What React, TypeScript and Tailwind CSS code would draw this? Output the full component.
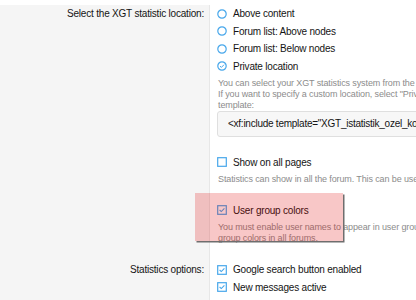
import { ReactNode } from 'react';

const font = { fontFamily: '"Liberation Sans", Arial, sans-serif' };

function Radio({ checked }: { checked?: boolean }) {
    return (
        <svg viewBox="0 0 10 10" className="w-[10px] h-[10px] shrink-0">
            <circle cx="5" cy="5" r="4.2" fill="white" stroke="#47a7eb" strokeWidth="1.2" />
            {checked && <path d="M3 5.1 L4.4 6.4 L7 3.7" fill="none" stroke="#47a7eb" strokeWidth="1" />}
        </svg>
    );
}

function Check({ checked }: { checked?: boolean }) {
    return (
        <svg viewBox="0 0 10 10" className="w-[10px] h-[10px] shrink-0">
            <rect x="0.7" y="0.7" width="8.6" height="8.6" fill="white" stroke="#47a7eb" strokeWidth="1.2" />
            {checked && <path d="M2.6 5 L4.3 6.6 L7.4 3.4" fill="none" stroke="#47a7eb" strokeWidth="1.1" />}
        </svg>
    );
}

function Option({ icon, children }: { icon: ReactNode; children: ReactNode }) {
    return (
        <div className="flex items-center h-[17.5px] gap-[6px] text-[10px] tracking-[-0.2px] text-[#141414]">
            {icon}
            <span>{children}</span>
        </div>
    );
}

function Hint({ children }: { children: ReactNode }) {
    return <div className="text-[9px] leading-[11px] tracking-[-0.12px] text-[#8c8c8c] pl-[1px]">{children}</div>;
}

function Row({ label, children, className = '' }: { label?: string; children: ReactNode; className?: string }) {
    return (
        <div className={`flex ${className}`}>
            <div className="w-[210px] shrink-0 bg-[#f5f5f5] border-r border-[#e7e7e7] pr-[5px] text-right">
                {label && (
                    <div className="h-[17.5px] leading-[17.5px] text-[10px] tracking-[-0.2px] text-[#141414]">{label}</div>
                )}
            </div>
            <div className="flex-1 pl-[7px] bg-white">{children}</div>
        </div>
    );
}

export default function App() {
    return (
        <div className="relative w-[416px] h-[300px] overflow-hidden whitespace-nowrap bg-white" style={font}>
            <Row label="Select the XGT statistic location:" className="pt-[5px]">
                <Option icon={<Radio />}>Above content</Option>
                <Option icon={<Radio />}>Forum list: Above nodes</Option>
                <Option icon={<Radio />}>Forum list: Below nodes</Option>
                <Option icon={<Radio checked />}>Private location</Option>
                <div className="pt-[2.5px]">
                    <Hint>You can select your XGT statistics system from the location you want.</Hint>
                    <Hint>If you want to specify a custom location, select "Private location" and add this</Hint>
                    <Hint>template:</Hint>
                </div>
                <div className="h-[26px] flex items-center pl-[10px] bg-[#f7f7f7] border border-[#dfdfdf] rounded-l-[3px] text-[10px] tracking-[-0.25px] text-[#141414]">
                    &lt;xf:include template="XGT_istatistik_ozel_konum" /&gt;
                </div>
                <div className="pt-[17px]">
                    <Option icon={<Check />}>Show on all pages</Option>
                    <div className="pt-[2.5px]">
                        <Hint>Statistics can show in all the forum. This can be used in all pages.</Hint>
                    </div>
                </div>
                <div className="pt-[17px] pb-[17.5px]">
                    <Option icon={<Check checked />}>User group colors</Option>
                    <div className="pt-[2.5px]">
                        <Hint>You must enable user names to appear in user group colors to use user</Hint>
                        <Hint>group colors in all forums.</Hint>
                    </div>
                </div>
            </Row>
            <Row label="Statistics options:">
                <Option icon={<Check checked />}>Google search button enabled</Option>
                <Option icon={<Check checked />}>New messages active</Option>
                <Option icon={<Check checked />}>New threads enabled</Option>
            </Row>
            <div className="absolute left-[195px] top-[193px] w-[148px] h-[48px] bg-[rgba(223,0,0,0.22)] shadow-[1.5px_1.5px_0_#6e6e6e]" />
        </div>
    );
}
